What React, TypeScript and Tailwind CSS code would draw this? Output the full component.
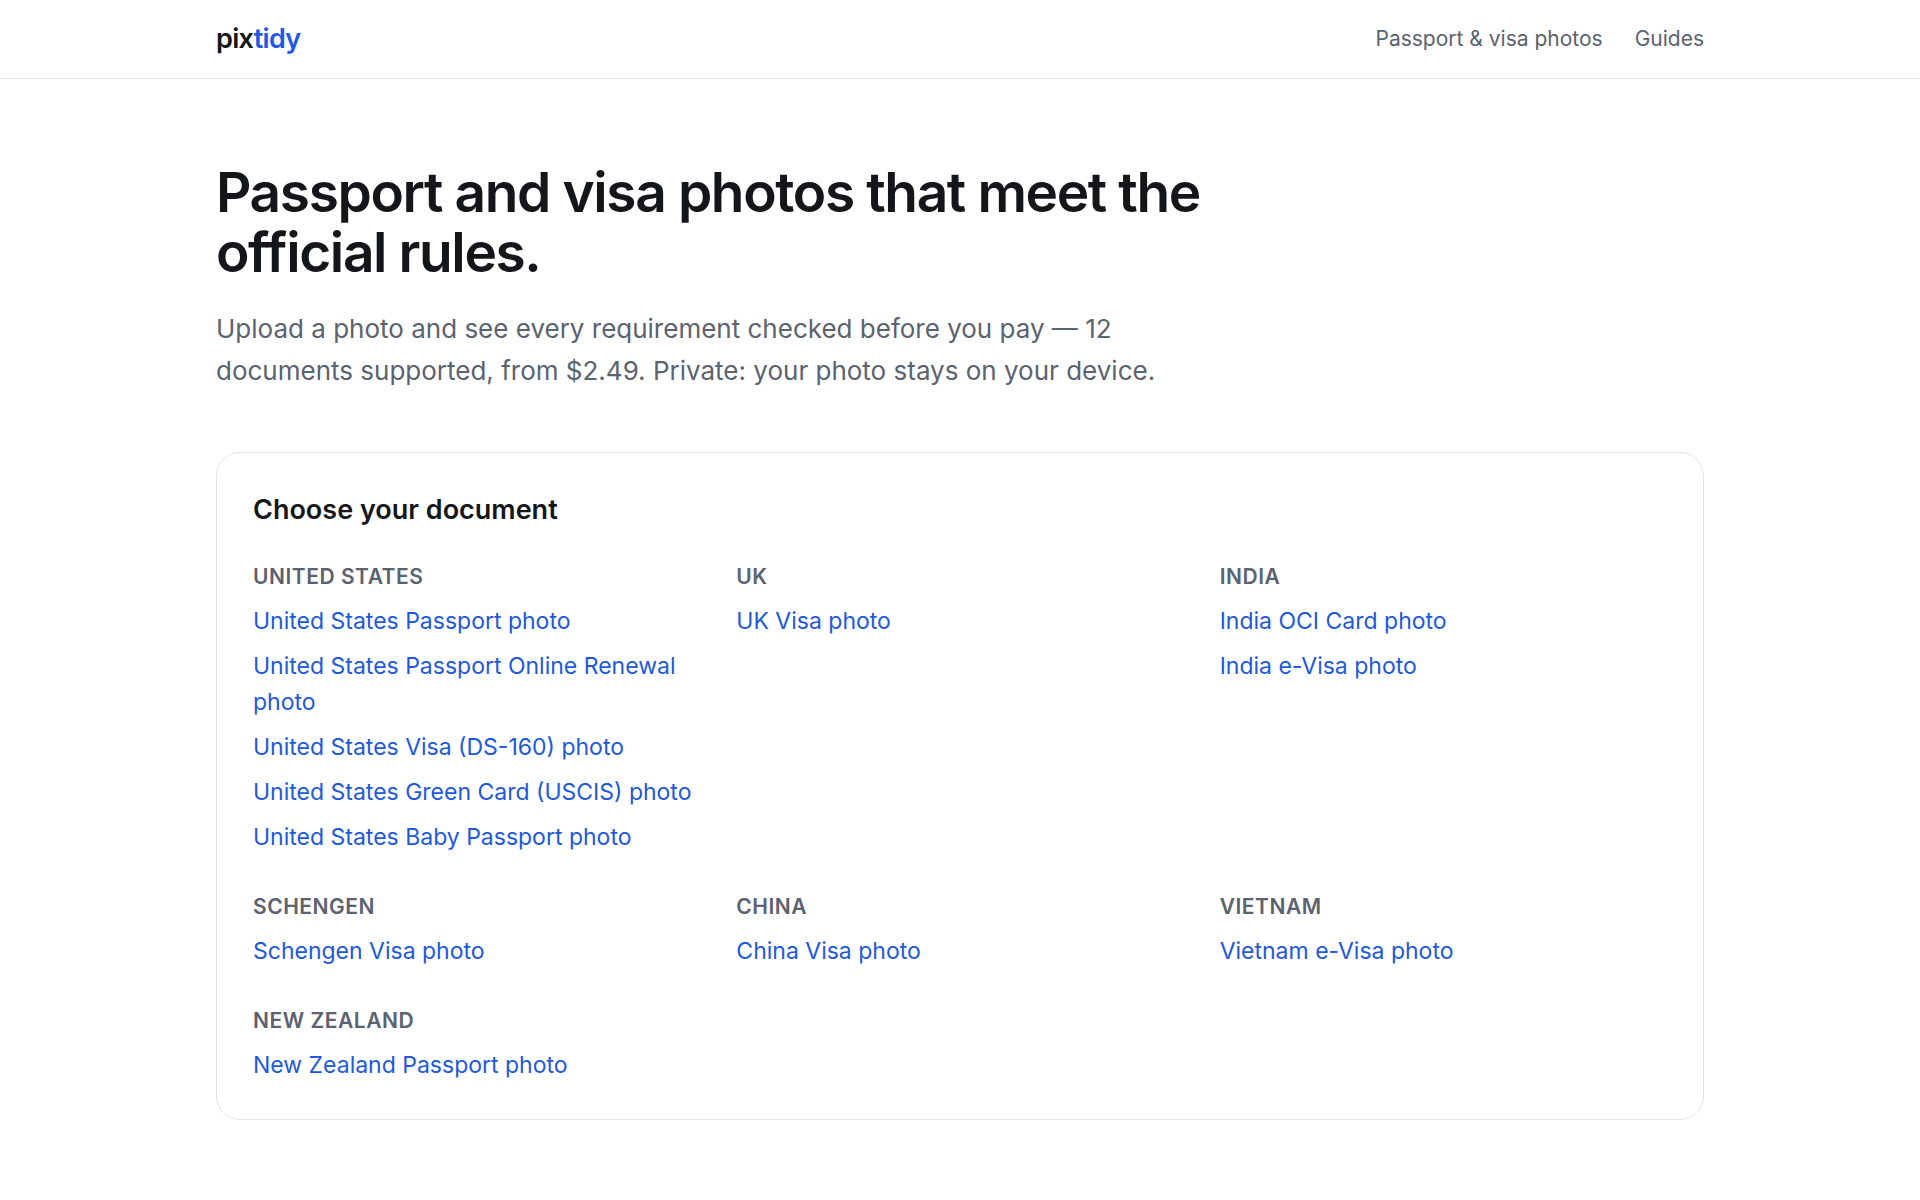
const documentGroups = [
  {
    region: 'United States',
    documents: [
      'United States Passport',
      'United States Passport Online Renewal',
      'United States Visa (DS-160)',
      'United States Green Card (USCIS)',
      'United States Baby Passport',
    ],
  },
  { region: 'UK', documents: ['UK Visa'] },
  { region: 'India', documents: ['India OCI Card', 'India e-Visa'] },
  { region: 'Schengen', documents: ['Schengen Visa'] },
  { region: 'China', documents: ['China Visa'] },
  { region: 'Vietnam', documents: ['Vietnam e-Visa'] },
  { region: 'New Zealand', documents: ['New Zealand Passport'] },
];

function Header() {
  return (
    <header className="border-b border-[#e5e7eb]">
      <div className="mx-auto flex max-w-[1548px] items-center justify-between px-[30px] py-5">
        <a href="/" className="text-[27px] leading-[38px] font-semibold tracking-tight">
          pix<span className="text-[#2159e6]">tidy</span>
        </a>
        <nav className="flex items-center gap-8 text-[21px] leading-[34px] text-[#5b6270]">
          <a href="/photos">Passport &amp; visa photos</a>
          <a href="/guides">Guides</a>
        </nav>
      </div>
    </header>
  );
}

function DocumentGroup({ region, documents }: { region: string; documents: string[] }) {
  return (
    <div>
      <h3 className="text-[21px] leading-8 font-semibold tracking-wide text-[#5b6270] uppercase">{region}</h3>
      <ul className="mt-[10px] flex flex-col gap-[9px] text-[23px] leading-9">
        {documents.map((name) => (
          <li key={name}>
            <a href="/photos" className="text-[#2159dc] hover:underline">
              {name} photo
            </a>
          </li>
        ))}
      </ul>
    </div>
  );
}

export default function App() {
  return (
    <div className="min-h-screen bg-white font-['Inter',sans-serif] text-[#14161a]">
      <Header />
      <main className="mx-auto max-w-[1548px] px-[30px] pt-[83px] pb-20">
        <h1 className="max-w-[1080px] text-[55px] leading-[60px] font-semibold tracking-tight">
          Passport and visa photos that meet the official rules.
        </h1>
        <p className="mt-[26px] max-w-[960px] text-[26px] leading-[42px] text-[#5b6270]">
          Upload a photo and see every requirement checked before you pay — 12 documents supported, from $2.49. Private:
          your photo stays on your device.
        </p>
        <section className="mt-[60px] rounded-3xl border border-[#e2e4e8] p-9">
          <h2 className="text-[27px] leading-[42px] font-semibold">Choose your document</h2>
          <div className="mt-[30px] grid grid-cols-3 gap-9">
            {documentGroups.map((group) => (
              <DocumentGroup key={group.region} {...group} />
            ))}
          </div>
        </section>
      </main>
    </div>
  );
}
